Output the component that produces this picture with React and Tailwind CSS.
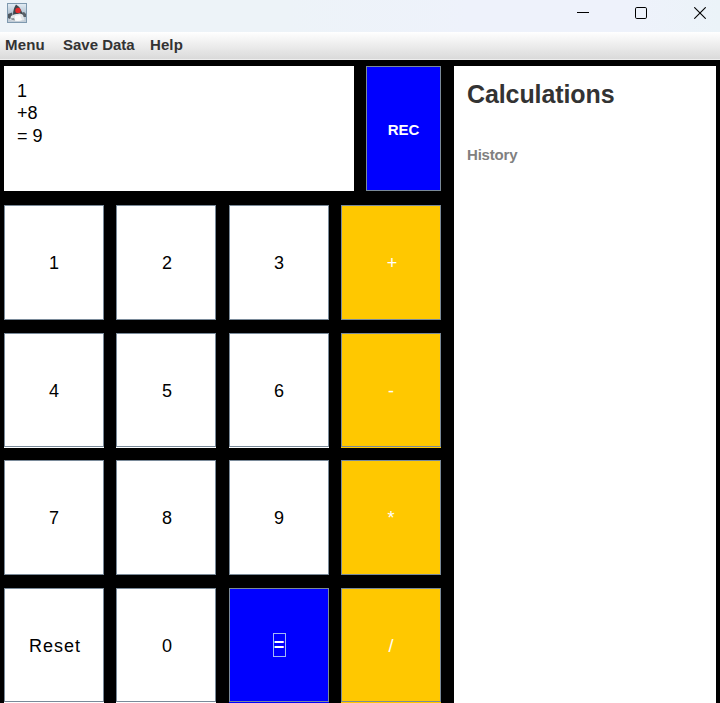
import React from 'react';

function JavaIcon() {
  return (
    <svg className="block" width="20" height="20" viewBox="0 0 20 20">
      <defs>
        <linearGradient id="tile" x1="0" y1="0" x2="0" y2="1">
          <stop offset="0" stopColor="#e4edf5" />
          <stop offset="0.5" stopColor="#b4c5d4" />
          <stop offset="1" stopColor="#c4ced8" />
        </linearGradient>
      </defs>
      <rect x="0.5" y="0.5" width="19" height="19" fill="url(#tile)" stroke="#7f99af" />
      <path d="M1 11 L5 9.5 L6 14 L3 16 L1 15Z" fill="#4d5760" />
      <path d="M14 10 L17 9 L19 11 V14 L15 14Z" fill="#596169" />
      <path d="M9 1.5 Q12 3 14 7 Q16 10 15 12 L6 12 Q6 6 9 1.5Z" fill="#40464b" />
      <path d="M4 13 Q8 10.5 10 11 Q14 9.5 16 12 L17.5 17 Q10 19 3 17Z" fill="#e4e6e8" />
      <path d="M8 13 L13 12 L15 17 Q11 18.5 8 17.5Z" fill="#fafafa" />
      <path d="M3 15.5 Q5 17.5 8 17.5 L7 15Z" fill="#8b9196" />
      <circle cx="11" cy="7.4" r="2.7" fill="#e52c2c" />
    </svg>
  );
}

function TitleBar() {
  return (
    <header className="flex h-8 items-start justify-between bg-[linear-gradient(90deg,#edf3f8_0%,#edf3f8_40%,#eef2fb_65%,#eef2fb_88%,#ebf3f8_100%)]">
      <div className="pl-[7px] pt-[3px]"><JavaIcon /></div>
      <div className="flex pr-[14px] pt-[7px]">
        <svg className="mr-[46px]" width="12" height="12"><path d="M0 5.5H12" stroke="#000" /></svg>
        <svg className="mr-[47px]" width="12" height="12"><rect x="0.5" y="0.5" width="11" height="11" rx="1.3" fill="none" stroke="#000" /></svg>
        <svg width="12" height="12"><path d="M0.3 0.3L11.7 11.7M11.7 0.3L0.3 11.7" stroke="#000" strokeWidth="1.1" /></svg>
      </div>
    </header>
  );
}

function MenuBar() {
  return (
    <nav className="flex h-7 border-b border-[#eeeeee] bg-[linear-gradient(#ffffff,#dadada)] pl-[5px] text-[15px] font-bold leading-[26px] text-[#333333]">
      <span className="w-[58px] tracking-[0.2px]">Menu</span>
      <span className="w-[87px] whitespace-nowrap">Save Data</span>
      <span className="tracking-[0.1px]">Help</span>
    </nav>
  );
}

const rows = [
  ['1', '2', '3', '+'],
  ['4', '5', '6', '-'],
  ['7', '8', '9', '*'],
  ['Reset', '0', '=', '/'],
];

function Key({ label, column, short }) {
  const colors = label === '=' ? 'bg-[#0000ff] text-white' : column === 3 ? 'bg-[#ffc800] text-white' : 'bg-white text-black';
  const nudge = label === 'Reset' ? 'pl-0.5 tracking-[1px]' : column === 1 || label === '+' ? 'pl-0.5' : '';
  return (
    <button className={`flex h-[115px] w-[100px] flex-col ${colors}`}>
      <span className={`flex w-full items-center justify-center border border-[#7a8a99] ${short ? 'h-[114px]' : 'h-[115px]'}`}>
        {label === '=' ? (
          <span className="flex h-6 w-[13px] items-center justify-center border border-[#a3b8f5] pt-px font-bold">=</span>
        ) : (
          <span className={`pt-0.5 ${nudge}`}>{label}</span>
        )}
      </span>
    </button>
  );
}

export default function App() {
  return (
    <div className="flex h-[703px] w-[720px] flex-col overflow-hidden bg-black font-['Liberation_Sans',Arial,sans-serif]">
      <TitleBar />
      <MenuBar />
      <main className="flex min-h-0 flex-1 gap-[13px] pl-1 pr-1 pt-1.5">
        <section className="w-[437px] shrink-0">
          <div className="flex gap-3">
            <div className="h-[125px] w-[350px] bg-white px-[13px] pt-[14px] text-[18px] leading-[22.4px] text-black">
              <div>1</div>
              <div>+8</div>
              <div>= 9</div>
            </div>
            <button className="h-[125px] w-[75px] border border-[#7a8a99] bg-[#0000ff] pt-1 text-[15px] font-bold text-white">REC</button>
          </div>
          <div className="mt-[14px] flex flex-col text-[18px]">
            {rows.map((row, i) => (
              <div key={i} className={`grid grid-cols-[112px_113px_112px_100px] ${i === 1 ? 'h-[127px]' : 'h-[128px]'}`}>
                {row.map((label, j) => (
                  <Key key={label} label={label} column={j} short={i === 1 || i === 3} />
                ))}
              </div>
            ))}
          </div>
        </section>
        <aside className="flex-1 bg-white pl-[13px] pt-[13px]">
          <h1 className="text-[25px] font-bold leading-[30px] tracking-[-0.1px] text-[#333333]">Calculations</h1>
          <h2 className="mt-[36px] text-[15px] font-bold leading-5 tracking-[-0.2px] text-[#808080]">History</h2>
        </aside>
      </main>
    </div>
  );
}
